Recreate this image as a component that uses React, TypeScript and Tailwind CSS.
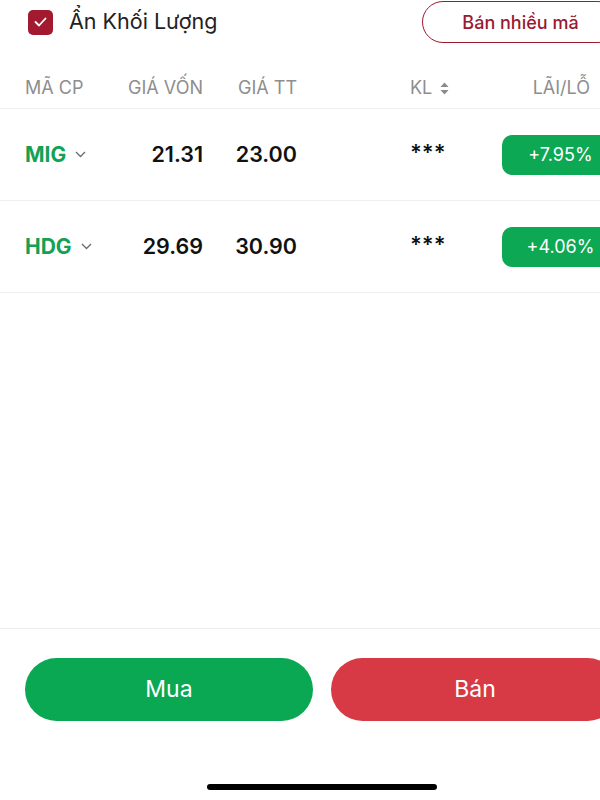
import React from 'react';

type Holding = {
  code: string;
  cost: string;
  price: string;
  pnl: string;
};

const holdings: Holding[] = [
  { code: 'MIG', cost: '21.31', price: '23.00', pnl: '+7.95%' },
  { code: 'HDG', cost: '29.69', price: '30.90', pnl: '+4.06%' },
];

const Chevron = () => (
  <svg className="w-[11px] h-[7px] ml-[9px]" viewBox="0 0 11 7" fill="none" stroke="#6b6b6b" strokeWidth="1.3">
    <path d="M1 1l4.5 4.5L10 1" />
  </svg>
);

const SortIcon = () => (
  <svg className="w-[9px] h-[13px] ml-[8px]" viewBox="0 0 9 13" fill="#8a8a8a">
    <path d="M4.5 0.5L8.5 5H0.5z" />
    <path d="M4.5 12.5L0.5 8H8.5z" />
  </svg>
);

const App = () => {
  return (
    <div
      className="w-[600px] h-[800px] overflow-hidden bg-white relative"
      style={{ fontFamily: 'Inter, "Noto Sans", sans-serif' }}
    >
      <div className="w-[644px] h-full flex flex-col">
        {/* Top bar */}
        <div className="h-[44px] flex items-center justify-between pl-[28px] pr-[25px]">
          <label className="flex items-center">
            <span className="w-[25px] h-[25px] rounded-[5px] bg-[#a3192f] flex items-center justify-center">
              <svg className="w-[13px] h-[10px]" viewBox="0 0 13 10" fill="none" stroke="white" strokeWidth="1.8" strokeLinecap="round" strokeLinejoin="round">
                <path d="M1.5 5l3.5 3.5L11.5 1.5" />
              </svg>
            </span>
            <span className="ml-[16px] text-[21.5px] text-[#222] leading-none">Ẩn Khối Lượng</span>
          </label>
          <button className="w-[197px] h-[42px] rounded-full border border-[#9a1a30] text-[#9a1a30] text-[18px] font-medium">
            Bán nhiều mã
          </button>
        </div>

        {/* Table header */}
        <div className="grid grid-cols-[100px_78px_94px_1fr_117px] px-[25px] pt-[33px] pb-[9px] border-b border-[#efefef] text-[18px] leading-[22px] text-[#8e8e8e]">
          <div>MÃ CP</div>
          <div className="text-right">GIÁ VỐN</div>
          <div className="text-right">GIÁ TT</div>
          <div className="pl-[113px] flex items-center">
            KL
            <SortIcon />
          </div>
          <div className="text-right pr-[29px]">LÃI/LỖ</div>
        </div>

        {/* Rows */}
        {holdings.map(h => (
          <div
            key={h.code}
            className="grid grid-cols-[100px_78px_94px_1fr_117px] items-center px-[25px] h-[92px] border-b border-[#efefef]"
          >
            <div className="flex items-center text-[21px] font-bold text-[#12a155]">
              {h.code}
              <Chevron />
            </div>
            <div className="text-right text-[21.5px] font-semibold text-[#111]">{h.cost}</div>
            <div className="text-right text-[21.5px] font-semibold text-[#111]">{h.price}</div>
            <div className="pl-[113px] text-[22px] font-semibold text-[#111] -mt-[4px]">***</div>
            <div className="h-[40px] rounded-[10px] bg-[#0ca853] text-white text-[18px] flex items-center justify-center">
              {h.pnl}
            </div>
          </div>
        ))}

        <div className="flex-1" />

        {/* Actions */}
        <div className="border-t border-[#ececec] pt-[29px] px-[25px] flex gap-[18px]">
          <button className="flex-1 h-[63px] rounded-full bg-[#0aa852] text-white text-[23px]">Mua</button>
          <button className="flex-1 h-[63px] rounded-full bg-[#d73a45] text-white text-[23px]">Bán</button>
        </div>

        {/* Home indicator */}
        <div className="h-[79px] flex items-end justify-center pb-[10px]">
          <div className="w-[230px] h-[6px] rounded-full bg-black" />
        </div>
      </div>
    </div>
  );
};

export default App;
